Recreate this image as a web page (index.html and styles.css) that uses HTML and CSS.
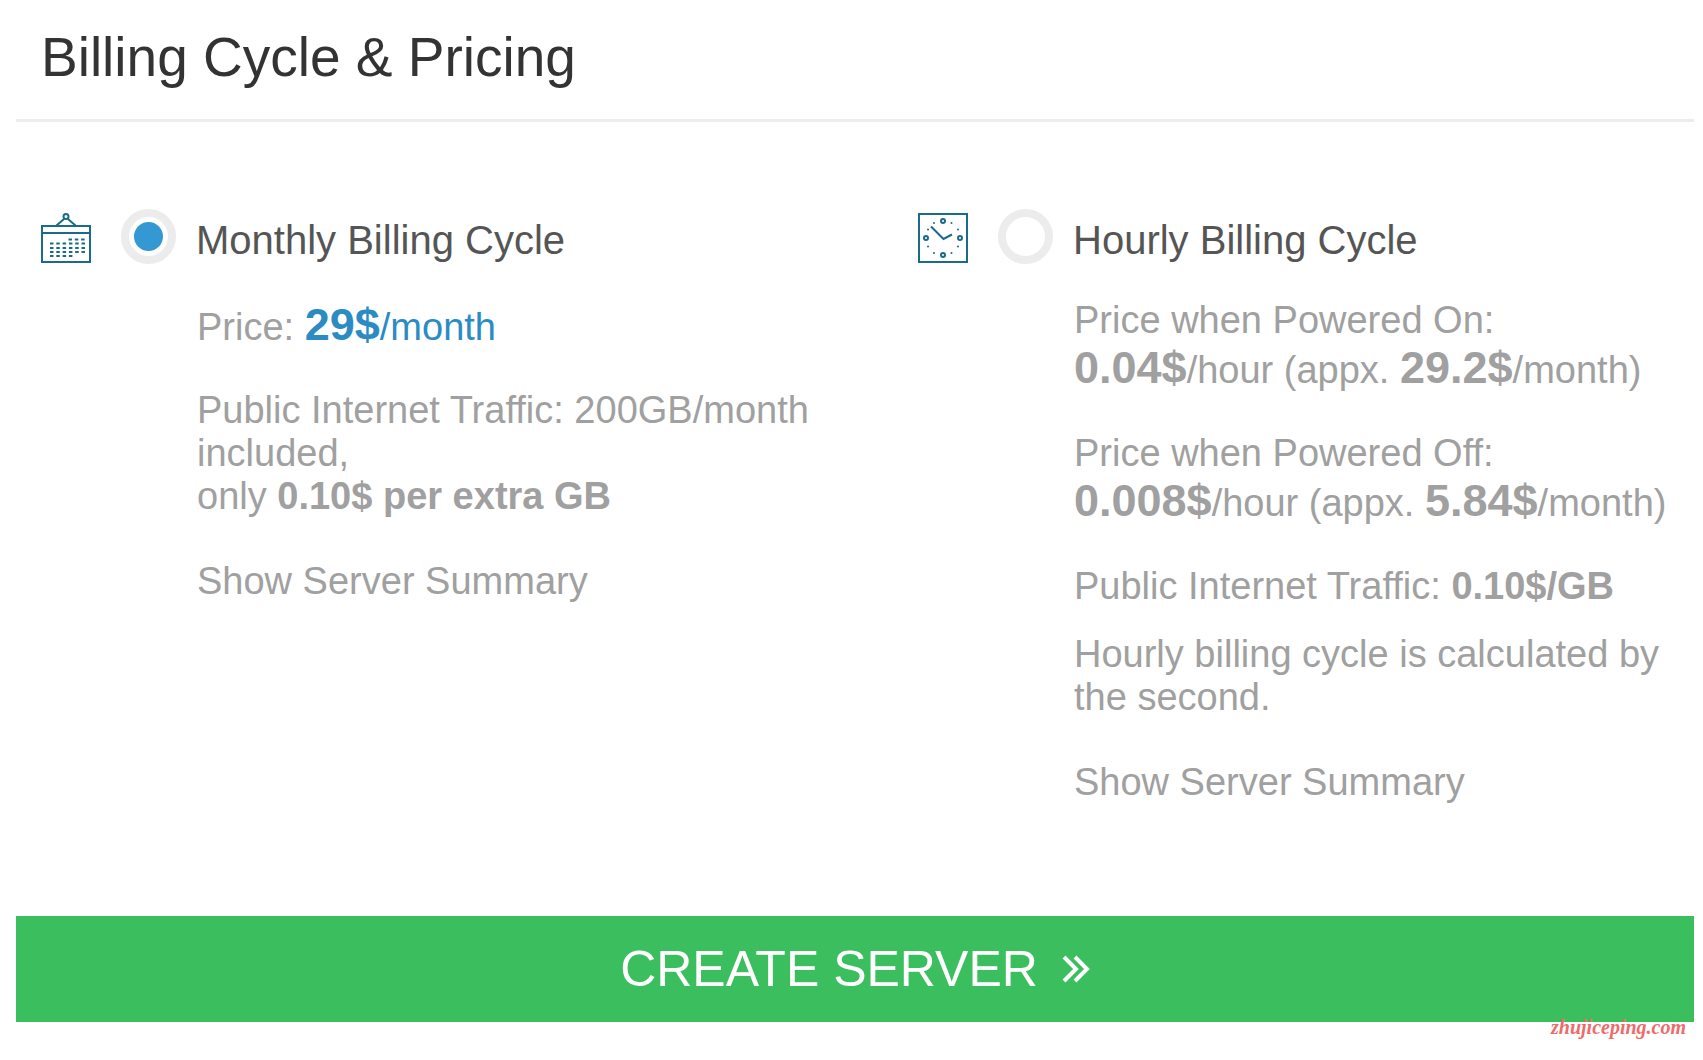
FILE: index.html
```html
<!DOCTYPE html>
<html lang="en">
<head>
  <meta charset="UTF-8">
  <title>Billing Cycle &amp; Pricing</title>
  <meta name="viewport" content="width=device-width, initial-scale=1">
  <link rel="stylesheet" href="styles.css">
</head>
<body>
  <form class="billing">
    <h1>Billing Cycle &amp; Pricing</h1>

    <div class="options">
      <section class="option">
        <div class="head">
          <svg class="icon" viewBox="0 0 50 50" aria-hidden="true">
            <g fill="none" stroke="#1b6a8c" stroke-width="2">
              <rect x="1" y="13" width="48" height="36"/>
              <path d="M1 20H49M15.500 12.500L23 6M34.500 12.500L27 6"/>
              <circle cx="25" cy="3.500" r="2.500"/>
              <path stroke-dasharray="3.500 2.800" d="M27.500 26.500H44M9 30.500H44M9 35H44M9 39H44M9 43H32"/>
            </g>
          </svg>
          <input type="radio" name="cycle" id="monthly" checked>
          <label for="monthly">Monthly Billing Cycle</label>
        </div>
        <div class="details">
          <p class="amount">Price: <span class="blue"><b class="big">29$</b>/month</span></p>
          <p>Public Internet Traffic: 200GB/month included,<br>only <b>0.10$ per extra GB</b></p>
          <a href="#" class="summary">Show Server Summary</a>
        </div>
      </section>

      <section class="option">
        <div class="head">
          <svg class="icon" viewBox="0 0 50 50" aria-hidden="true">
            <g fill="none" stroke="#1b6a8c" stroke-width="2">
              <rect x="1" y="1" width="48" height="48"/>
              <path d="M13 13.500L25.500 26L34 21.500"/>
              <circle cx="25" cy="8" r="2"/>
              <circle cx="42" cy="25" r="2"/>
              <circle cx="25" cy="42" r="2"/>
              <circle cx="8" cy="25" r="2"/>
            </g>
            <g fill="#1b6a8c">
              <circle cx="16" cy="10" r="1"/>
              <circle cx="33.500" cy="10" r="1"/>
              <circle cx="10" cy="16.500" r="1"/>
              <circle cx="40" cy="16.500" r="1"/>
              <circle cx="10" cy="33.500" r="1"/>
              <circle cx="40" cy="33.500" r="1"/>
              <circle cx="16" cy="40" r="1"/>
              <circle cx="33.500" cy="40" r="1"/>
            </g>
          </svg>
          <input type="radio" name="cycle" id="hourly">
          <label for="hourly">Hourly Billing Cycle</label>
        </div>
        <div class="details">
          <p>Price when Powered On:
            <span class="amount"><b class="big">0.04$</b>/hour (appx. <b class="big">29.2$</b>/month)</span>
          </p>
          <p>Price when Powered Off:
            <span class="amount"><b class="big">0.008$</b>/hour (appx. <b class="big">5.84$</b>/month)</span>
          </p>
          <p class="traffic">Public Internet Traffic: <b>0.10$/GB</b></p>
          <p>Hourly billing cycle is calculated by the second.</p>
          <a href="#" class="summary">Show Server Summary</a>
        </div>
      </section>
    </div>

    <div class="footer">
      <button type="button" class="create">
        CREATE SERVER
        <svg class="chevrons" viewBox="0 0 28 28" aria-hidden="true">
          <path d="M2 2L14 14L2 26M13 2L25 14L13 26" fill="none" stroke="#fff" stroke-width="4"/>
        </svg>
      </button>
      <span class="watermark">zhujiceping.com</span>
    </div>
  </form>
</body>
</html>
```
FILE: styles.css
```css
body {
  background-color: #fff;
  color: #a0a0a0;
  font-family: Arial, "Liberation Sans", sans-serif;
  margin: 0;
}
.billing {
  padding: 0 9px 38px 16px;
}
h1 {
  font-size: 55px;
  font-weight: normal;
  line-height: 63px;
  color: #333;
  margin: 0;
  padding: 26px 25px 30px;
  border-bottom: 3px solid #ececec;
}
.options {
  display: grid;
  grid-template-columns: 877fr 801fr;
  margin-top: 87px;
}
.option {
  padding-left: 25px;
}
.head {
  display: flex;
  align-items: flex-end;
}
.icon {
  width: 50px;
  height: 50px;
  margin: 0 30px 1px 0;
}
.head input {
  appearance: none;
  box-sizing: border-box;
  width: 55px;
  height: 55px;
  margin: 0 20px 0 0;
  padding: 5px;
  border: 8px solid #ececec;
  border-radius: 50%;
}
.head input:checked {
  background: #3499d3 content-box;
}
.head label {
  font-size: 40px;
  line-height: 46px;
  margin-bottom: 1px;
  color: #555;
}
.details {
  font-size: 38px;
  line-height: 43px;
  margin-top: 35px;
  padding: 0 30px 0 156px;
}
.option + .option .details {
  padding-right: 0;
}
.details p {
  margin: 0 0 40px;
}
.details .traffic {
  margin-bottom: 25px;
}
.amount {
  display: block;
  padding-top: 4px;
}
.big {
  font-size: 45px;
}
.blue {
  color: #2b8cc4;
}
.summary {
  display: inline-block;
  margin-top: 2px;
  color: inherit;
  text-decoration: none;
}
.footer {
  position: relative;
  margin-top: 112px;
}
.create {
  display: flex;
  align-items: center;
  justify-content: center;
  gap: 24px;
  width: 100%;
  height: 106px;
  padding: 0;
  border: none;
  background-color: #3bbf5e;
  color: #fff;
  font-family: inherit;
  font-size: 50px;
  cursor: pointer;
}
.chevrons {
  width: 28px;
  height: 28px;
}
.watermark {
  position: absolute;
  right: 8px;
  bottom: -17px;
  font: italic bold 20px/24px "Liberation Serif", serif;
  color: #ee6b6b;
}
```
